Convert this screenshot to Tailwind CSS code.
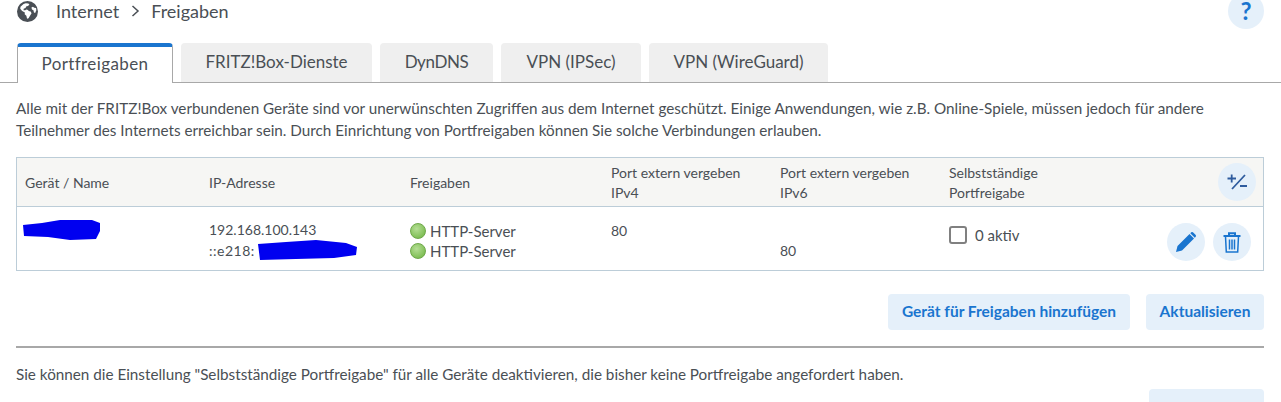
<!DOCTYPE html>
<html lang="de">
<head>
<meta charset="UTF-8" />
<title>Freigaben</title>
<script src="https://cdn.jsdelivr.net/npm/@tailwindcss/browser@4"></script>
</head>
<body class="bg-white h-[402px] overflow-hidden font-['Lato','Noto_Sans',sans-serif] text-[15.25px] text-[#4a4f55]">
  <!-- breadcrumb -->
  <header class="flex items-center h-[36px] -mt-[7px] px-[17px]">
    <svg class="w-[21px] h-[21px]" viewBox="0 0 24 24" fill="#4a4f55">
      <path fill-rule="evenodd" d="M12 0a12 12 0 1 0 0 24 12 12 0 0 0 0-24zM4 6.500 7.500 3.500 10 2.500l3 .3 1.200 1.400-1.800 1.600-2 .6-.6 1.700-2.200.9-.1 1.700 1.900-.1 1.300-1 1.900.7.7 1.200 2.300.5 1 2.100-1.900 3.100-1.500 2.600-1.700.4-.8-3.300-1.900-1.700.2-2.100-3.100-1.700-2.200-2.500zM16.500 7.500l1.700-.8 1.500 1.100 2.100.2.300 2.700-1.400 3.100-1.300-.6-.6-2.500-1.700-1.100z"/>
    </svg>
    <span class="ml-[18px] text-[18px]">Internet</span>
    <svg class="w-[9px] h-[12px] ml-[12px]" viewBox="0 0 9 12" fill="none" stroke="#4a4f55" stroke-width="1.500"><path d="M1.500 1l5.500 5-5.500 5"/></svg>
    <span class="ml-[11px] text-[18px]">Freigaben</span>
    <span class="ml-auto w-[36px] h-[36px] rounded-full bg-[#e5f0fa] flex items-center justify-center">
      <span class="text-[#1a75cf] text-[24px] leading-[20px] font-bold">?</span>
    </span>
  </header>

  <!-- tabs -->
  <nav class="flex items-end h-[40px] mt-[14px] border-b border-[#a8a8a8] pl-[17px] text-[17px]">
    <a class="w-[156px] h-[40px] -mb-px bg-white border-x border-[#a8a8a8] border-t-4 border-t-[#1a75cf] rounded-t-[4px] flex items-center justify-center tracking-[0.4px] pb-[3px]">Portfreigaben</a>
    <a class="ml-[8px] w-[191px] h-[39px] bg-[#efefef] rounded-t-[4px] flex items-center justify-center pb-[1px]">FRITZ!Box-Dienste</a>
    <a class="ml-[8px] w-[113px] h-[39px] bg-[#efefef] rounded-t-[4px] flex items-center justify-center tracking-[-0.4px] pb-[1px]">DynDNS</a>
    <a class="ml-[8px] w-[140px] h-[39px] bg-[#efefef] rounded-t-[4px] flex items-center justify-center pb-[1px]">VPN (IPSec)</a>
    <a class="ml-[8px] w-[179px] h-[39px] bg-[#efefef] rounded-t-[4px] flex items-center justify-center pb-[1px]">VPN (WireGuard)</a>
  </nav>

  <main class="pl-[16px] pr-[17px]">
    <p class="mt-[14px] leading-[22px]">Alle mit der FRITZ!Box verbundenen Geräte sind vor unerwünschten Zugriffen aus dem Internet geschützt. Einige Anwendungen, wie z.B. Online-Spiele, müssen jedoch für andere Teilnehmer des Internets erreichbar sein. Durch Einrichtung von Portfreigaben können Sie solche Verbindungen erlauben.</p>

    <!-- table -->
    <section class="mt-[16px] border border-[#bccdd8] text-[14px]">
      <div class="grid grid-cols-[184px_201px_201px_169px_169px_1fr] h-[49px] bg-[#f6f6f4] border-b border-[#bccdd8] items-center leading-[20px] pl-[8px] pt-[2px]">
        <span>Gerät / Name</span>
        <span>IP-Adresse</span>
        <span>Freigaben</span>
        <span>Port extern vergeben<br />IPv4</span>
        <span>Port extern vergeben<br />IPv6</span>
        <div class="flex items-center justify-between pr-[7px]">
          <span>Selbstständige<br />Portfreigabe</span>
          <span class="w-[38px] h-[38px] -mt-[2px] rounded-full bg-[#e5f0fa] flex items-center justify-center">
            <svg class="w-[20px] h-[16px]" viewBox="0 0 20 16" fill="none" stroke="#2f5c9e" stroke-width="1.800"><path d="M.5 4.500h8.500M4.700.5v8M18 1 5 15M13 12h7"/></svg>
          </span>
        </div>
      </div>
      <div class="grid grid-cols-[184px_201px_201px_169px_169px_1fr] h-[63px] pl-[8px] leading-[20px]">
        <div class="pt-[12px]">
          <svg class="w-[82px] h-[22px] -ml-[4px]" viewBox="0 0 80 22" fill="#0000f0"><path d="M1 6 20 4 38 1 70 1 78 4 78 12 74 20 48 21 26 18 2 17z"/></svg>
        </div>
        <div class="pt-[13px]">
          192.168.100.143<br />
          <span class="flex items-center"><span class="tracking-[0.5px]">::e218:</span><svg class="w-[102px] h-[22px] ml-[1px] -mt-[1px]" viewBox="0 0 102 22" fill="#0000f0"><path d="M2 5 30 3 60 1 90 4 101 8 100 16 78 19 40 20 4 21z"/></svg></span>
        </div>
        <div class="pt-[14px] text-[15px]">
          <div class="flex items-center gap-[4px]"><span class="w-[16px] h-[16px] rounded-full border border-[#6fa84a] bg-[radial-gradient(circle_at_40%_35%,#b5de95,#6cb33f)]"></span>HTTP-Server</div>
          <div class="flex items-center gap-[4px]"><span class="w-[16px] h-[16px] rounded-full border border-[#6fa84a] bg-[radial-gradient(circle_at_40%_35%,#b5de95,#6cb33f)]"></span>HTTP-Server</div>
        </div>
        <div class="pt-[14px]">80</div>
        <div class="pt-[34px]">80</div>
        <div class="flex justify-between pr-[12px]">
          <label class="flex items-center h-[20px] mt-[18px] gap-[8px] text-[15px]"><span class="w-[18px] h-[18px] rounded-[3px] border-2 border-[#808080]"></span>0 aktiv</label>
          <div class="flex gap-[8px] mt-[16px]">
            <span class="w-[38px] h-[38px] rounded-full bg-[#e5f0fa] flex items-center justify-center">
              <svg class="w-[20px] h-[20px]" viewBox="0 0 20 20" fill="#1a75cf"><path d="M0 20l1.500-6L13.500 2l4.500 4.500L6 18.500zM15 .5a1.600 1.600 0 0 1 2.200 0l2.300 2.300a1.600 1.600 0 0 1 0 2.200L18.800 5.700 14.300 1.200z"/></svg>
            </span>
            <span class="w-[38px] h-[38px] rounded-full bg-[#e5f0fa] flex items-center justify-center">
              <svg class="w-[18px] h-[21px]" viewBox="0 0 18 21" fill="none" stroke="#1a75cf" stroke-width="1.500"><path d="M.5 4h17M6 4V1.200h6V4" stroke-width="2"/><path d="M2.500 4.500 3.300 20h11.400l.8-15.500M6.500 7.500v10M9 7.500v10M11.500 7.500v10"/></svg>
            </span>
          </div>
        </div>
      </div>
    </section>

    <!-- actions -->
    <div class="flex justify-end gap-[16px] mt-[23px] font-bold text-[15.5px] text-[#1a75cf]">
      <button class="w-[242px] h-[36px] rounded-[4px] bg-[#e5f0fa]">Gerät für Freigaben hinzufügen</button>
      <button class="w-[118px] h-[36px] rounded-[4px] bg-[#e5f0fa]">Aktualisieren</button>
    </div>
    <hr class="mt-[16px] border-t-2 border-[#a8a8a8]" />
    <p class="mt-[15px] leading-[22px]">Sie können die Einstellung "Selbstständige Portfreigabe" für alle Geräte deaktivieren, die bisher keine Portfreigabe angefordert haben.</p>
    <div class="flex justify-end mt-[4px]">
      <span class="w-[115px] h-[36px] rounded-[4px] bg-[#e5f0fa]"></span>
    </div>
  </main>
</body>
</html>
